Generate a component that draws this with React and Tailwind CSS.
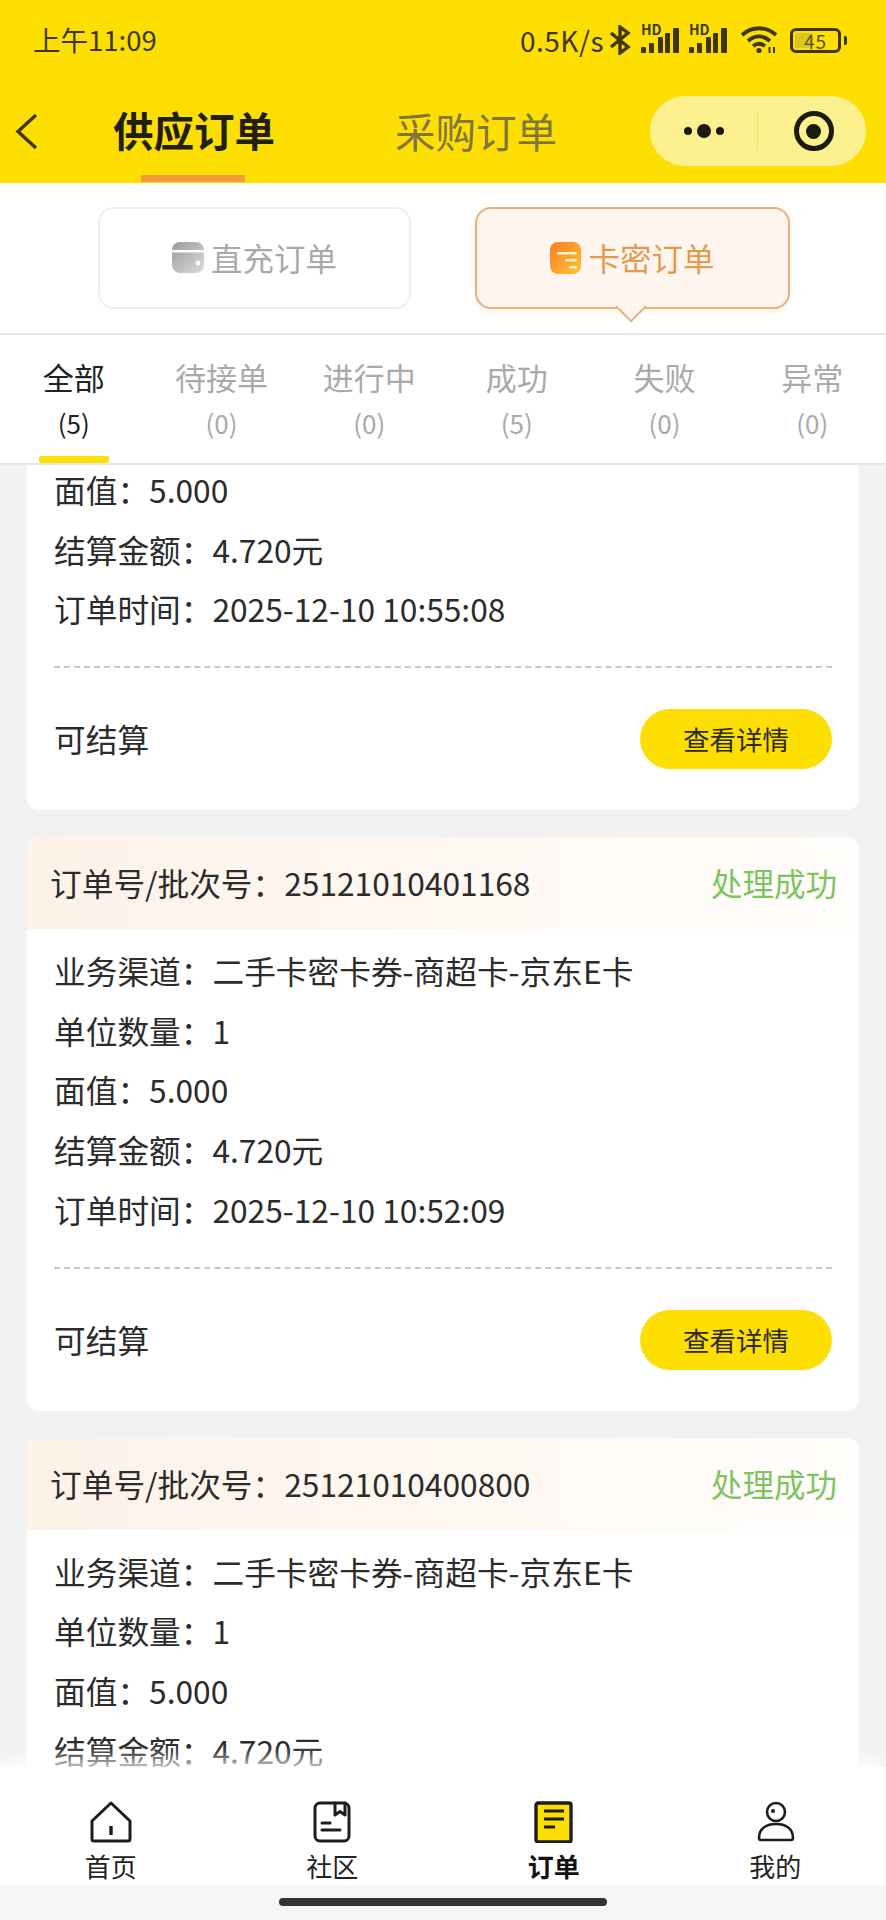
import React from "react";

const FONT = '"Noto Sans CJK SC", "Noto Sans", sans-serif';

const orders = [
  { id: "25121010401500", time: "2025-12-10 10:55:08", scrolled: true },
  { id: "25121010401168", time: "2025-12-10 10:52:09" },
  { id: "25121010400800", time: "2025-12-10 10:49:33" },
];

const filters = [
  ["全部", 5],
  ["待接单", 0],
  ["进行中", 0],
  ["成功", 5],
  ["失败", 0],
  ["异常", 0],
];

function Signal() {
  return (
    <div className="relative h-[28px] w-[40px]">
      <span className="absolute left-0 top-[-4px] text-[14px] font-bold leading-[14px] text-[#40360a]">HD</span>
      <svg className="absolute inset-0" width="40" height="28" viewBox="0 0 40 28" fill="#40360a">
        <rect x="0" y="21" width="5" height="6" rx="1" />
        <rect x="8" y="17" width="5" height="10" rx="1" />
        <rect x="17" y="11" width="5" height="16" rx="1" />
        <rect x="24" y="7" width="5" height="20" rx="1" />
        <rect x="32" y="2" width="6" height="25" rx="1" />
      </svg>
    </div>
  );
}

function StatusBar() {
  return (
    <div className="flex h-[80px] items-center pl-[33px] text-[#40360a]">
      <span className="text-[27.5px] leading-none">上午11:09</span>
      <div className="ml-auto mr-[39px] flex items-center">
        <span className="text-[28px] leading-none tracking-[0.5px]">0.5K/s</span>
        <svg className="ml-[5px]" width="22" height="30" viewBox="0 0 22 30" fill="none" stroke="#40360a" strokeWidth="3.4">
          <path d="M2 8l17 14-8 6V2l8 6L2 22" />
        </svg>
        <div className="ml-[10px] flex gap-[8px]">
          <Signal />
          <Signal />
        </div>
        <svg className="ml-[11px]" width="38" height="28" viewBox="0 0 38 28" fill="none" stroke="#40360a" strokeWidth="3.8">
          <path d="M2 9c10-9 24-9 34 0" />
          <path d="M8 15c7-6 15-6 22 0" />
          <path d="M13 20c4-3 8-3 12 0" />
          <circle cx="19" cy="24.5" r="2.6" fill="#40360a" stroke="none" />
          <path d="M29.5 21v6M34 21v6" strokeWidth="2" />
        </svg>
        <div className="ml-[12px] flex items-center">
          <div className="relative flex h-[25px] w-[51px] items-center justify-center rounded-[6px] border-[3px] border-[#40360a]">
            <div className="absolute inset-y-[2px] left-[2px] w-[18px] rounded-[2px] bg-[#d8c81c]" />
            <span className="relative text-[19px] leading-none tracking-[1px] text-[#5a5020]">45</span>
          </div>
          <div className="ml-[3px] h-[9px] w-[3px] rounded-r-[2px] bg-[#40360a]" />
        </div>
      </div>
    </div>
  );
}

function NavBar() {
  return (
    <div className="flex h-[103px] items-center pb-[1px] pl-[15px] pr-[20px]">
      <svg width="23" height="37" viewBox="0 0 23 37" fill="none" stroke="#40360a" strokeWidth="3.4">
        <path d="M21 2L3 18.5 21 35" />
      </svg>
      <div className="relative ml-[75px] w-[162px]">
        <span className="text-[40.5px] font-bold leading-none text-[#221f10]">供应订单</span>
        <div className="absolute bottom-[-30px] left-[28px] h-[7px] w-[104px] bg-[#f59a3c]" />
      </div>
      <span className="ml-[120px] text-[40.5px] leading-none text-[#80763a]">采购订单</span>
      <div className="ml-auto flex h-[70px] w-[216px] items-center rounded-[35px] bg-[#fdf08f]">
        <div className="flex w-[107px] items-center justify-center gap-[5px] pl-[1px]">
          <span className="h-[8px] w-[8px] rounded-full bg-[#1c1a10]" />
          <span className="h-[14px] w-[14px] rounded-full bg-[#1c1a10]" />
          <span className="h-[8px] w-[8px] rounded-full bg-[#1c1a10]" />
        </div>
        <div className="h-[38px] w-px bg-[#efe07a]" />
        <div className="flex flex-1 items-center justify-center pl-[3px]">
          <div className="flex h-[40px] w-[40px] items-center justify-center rounded-full border-[5px] border-[#1c1a10]">
            <span className="h-[15px] w-[15px] rounded-full bg-[#1c1a10]" />
          </div>
        </div>
      </div>
    </div>
  );
}

function TypeTabs() {
  return (
    <div className="flex h-[152px] gap-[64px] border-b-2 border-[#e8e8e8] bg-white pl-[98px] pt-[24px]">
      <div className="flex h-[102px] w-[313px] items-center justify-center gap-[7px] rounded-[16px] border-2 border-[#eeeeee]">
        <svg width="32" height="32" viewBox="0 0 32 32">
          <defs>
            <linearGradient id="walletGray" x1="0" y1="0" x2="1" y2="1">
              <stop offset="0" stopColor="#9a9a9a" />
              <stop offset="1" stopColor="#dcdcdc" />
            </linearGradient>
          </defs>
          <rect width="32" height="31" rx="8" fill="url(#walletGray)" />
          <rect y="8" width="32" height="2.5" fill="#fff" />
          <circle cx="26" cy="21" r="2.4" fill="#fff" />
        </svg>
        <span className="text-[31.5px] leading-none text-[#a9a9a9]">直充订单</span>
      </div>
      <div className="relative flex h-[102px] w-[315px] items-center justify-center gap-[7px] rounded-[16px] border-2 border-[#e6b27c] bg-[#fef6ee] shadow-[0_2px_6px_rgba(240,170,100,0.18)]">
        <svg width="31" height="32" viewBox="0 0 31 32">
          <defs>
            <linearGradient id="listOrange" x1="0" y1="0" x2="1" y2="1">
              <stop offset="0" stopColor="#fb7f2a" />
              <stop offset="1" stopColor="#fdc32e" />
            </linearGradient>
          </defs>
          <rect width="31" height="32" rx="8" fill="url(#listOrange)" />
          <rect x="7" y="10" width="20" height="2.6" rx="1.3" fill="#fff3d0" />
          <rect x="15" y="17" width="12" height="2.6" rx="1.3" fill="#fff3d0" />
          <rect x="19" y="24" width="8" height="2.6" rx="1.3" fill="#fff3d0" />
        </svg>
        <span className="text-[31.5px] leading-none text-[#e39a4c]">卡密订单</span>
        <div className="absolute bottom-[-11px] left-[143px] h-[22px] w-[22px] rotate-45 border-b-2 border-r-2 border-[#e6b27c] bg-[#fef6ee]" />
      </div>
    </div>
  );
}

function FilterTabs() {
  return (
    <div className="grid h-[130px] grid-cols-6 border-b-2 border-[#e8e8e8] bg-white">
      {filters.map(([label, count], i) => (
        <div key={label} className={`relative flex flex-col items-center pt-[21px] ${i === 0 ? "text-[#222222]" : "text-[#aaaaaa]"}`}>
          <span className="text-[31px] leading-[42px]">{label}</span>
          <span className="mt-[4px] text-[26px] leading-[42px]">({count})</span>
          {i === 0 && <div className="absolute bottom-0 left-[39px] h-[7px] w-[70px] rounded-[2px] bg-[#fddf04]" />}
        </div>
      ))}
    </div>
  );
}

function Row({ label, value }) {
  return (
    <div className="h-[59.7px] text-[31.7px] leading-[59.7px] text-[#2c2c2c]">
      {label}：{value}
    </div>
  );
}

function OrderCard({ order }) {
  return (
    <div className={`overflow-hidden bg-white ${order.scrolled ? "rounded-b-[12px]" : "rounded-[12px]"}`}>
      {!order.scrolled && (
        <div className="flex h-[92px] items-center justify-between bg-gradient-to-r from-[#fdf2e8] to-[#fffdfb] pl-[23px] pr-[22px] text-[31.7px]">
          <span className="text-[#2c2c2c]">订单号/批次号：{order.id}</span>
          <span className="text-[31.5px] text-[#7dc460]">处理成功</span>
        </div>
      )}
      <div className={`px-[27px] ${order.scrolled ? "" : "pt-[12px]"}`}>
        {!order.scrolled && (
          <>
            <Row label="业务渠道" value="二手卡密卡券-商超卡-京东E卡" />
            <Row label="单位数量" value="1" />
          </>
        )}
        <Row label="面值" value="5.000" />
        <Row label="结算金额" value="4.720元" />
        <Row label="订单时间" value={order.time} />
        <div className="mt-[27px] border-t-2 border-dashed border-[#c8c8c8]" />
        <div className="flex items-center justify-between pb-[41px] pt-[41px]">
          <span className="text-[31.7px] leading-none text-[#2c2c2c]">可结算</span>
          <button className="flex h-[60px] w-[192px] items-center justify-center rounded-[30px] bg-[#fddf04] text-[26.5px] text-[#2c2a14]">
            查看详情
          </button>
        </div>
      </div>
    </div>
  );
}

const iconStroke = { fill: "none", stroke: "#1d1d1d", strokeWidth: 3, strokeLinejoin: "round", strokeLinecap: "round" };

function HomeIcon() {
  return (
    <svg width="42" height="42" viewBox="0 0 42 42" {...iconStroke}>
      <path d="M21 2L40 20v18a2 2 0 0 1-2 2H4a2 2 0 0 1-2-2V20z" />
      <path d="M21 25v9" strokeLinecap="butt" strokeWidth="3.4" />
    </svg>
  );
}

function CommunityIcon() {
  return (
    <svg width="42" height="42" viewBox="0 0 42 42" {...iconStroke}>
      <rect x="4" y="2" width="34" height="38" rx="5" />
      <path d="M24 2v12l5-3.5 5 3.5V2" />
      <path d="M11 22h8M11 29h18" />
    </svg>
  );
}

function OrdersIcon() {
  return (
    <svg width="42" height="42" viewBox="0 0 42 42" fill="#fddf04" stroke="#1d1d1d" strokeWidth="3.4" strokeLinejoin="round">
      <rect x="3" y="2" width="35" height="39" rx="2" />
      <path d="M11 10h20M11 18h20M11 26h11" strokeWidth="3" />
    </svg>
  );
}

function ProfileIcon() {
  return (
    <svg className="ml-[2px]" width="42" height="42" viewBox="0 0 42 42" {...iconStroke} strokeWidth="2.6">
      <circle cx="21" cy="11" r="9" />
      <circle cx="18" cy="10" r="2" fill="#1d1d1d" stroke="none" />
      <path d="M4 37c0-10 8-14 17-14s17 4 17 14a2 2 0 0 1-2 2H6a2 2 0 0 1-2-2z" />
    </svg>
  );
}

const navItems = [
  { label: "首页", Icon: HomeIcon },
  { label: "社区", Icon: CommunityIcon },
  { label: "订单", Icon: OrdersIcon, active: true },
  { label: "我的", Icon: ProfileIcon },
];

function BottomNav() {
  return (
    <div className="relative grid h-[118px] grid-cols-4 bg-white shadow-[0_-8px_14px_rgba(255,255,255,0.8)]">
      {navItems.map(({ label, Icon, active }) => (
        <div key={label} className="flex flex-col items-center pt-[34px]">
          <Icon />
          <span className={`mt-[5px] text-[26px] leading-[36px] ${active ? "font-bold text-[#111111]" : "text-[#222222]"}`}>{label}</span>
        </div>
      ))}
    </div>
  );
}

export default function App() {
  return (
    <div className="flex h-[1920px] w-[886px] flex-col overflow-hidden bg-[#f2f2f2]" style={{ fontFamily: FONT }}>
      <div className="bg-[#fddf04]">
        <StatusBar />
        <NavBar />
      </div>
      <TypeTabs />
      <FilterTabs />
      <div className="min-h-0 flex-1 overflow-hidden">
        <div className="-mt-[5px] flex flex-col gap-[27px] px-[27px]">
          {orders.map((order) => (
            <OrderCard key={order.id} order={order} />
          ))}
        </div>
      </div>
      <BottomNav />
      <div className="flex h-[35px] justify-center bg-[#f6f6f6] pt-[13px]">
        <div className="h-[8px] w-[328px] rounded-full bg-[#333333]" />
      </div>
    </div>
  );
}
